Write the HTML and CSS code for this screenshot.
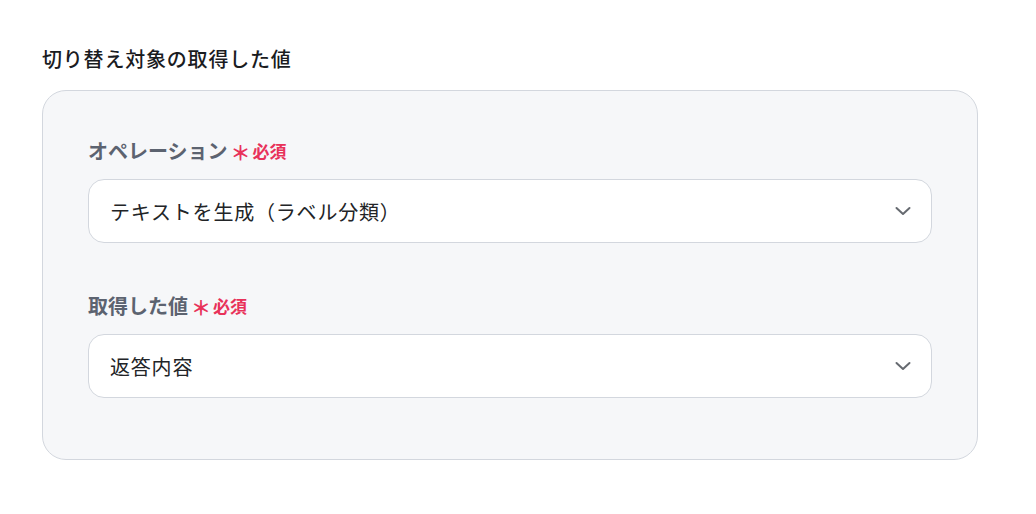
FILE: index.html
```html
<!DOCTYPE html>
<html lang="ja">
<head>
<meta charset="utf-8">
<link rel="stylesheet" href="styles.css">
</head>
<body>
<div class="page">
  <h2 class="title">切り替え対象の取得した値</h2>
  <div class="card">
    <div class="field">
      <div class="label">オペレーション<span class="req"><span class="ast">＊</span>必須</span></div>
      <div class="select">
        <span class="value">テキストを生成（ラベル分類）</span>
        <svg class="chev" width="20" height="20" viewBox="0 0 20 20"><path d="M3.5 7 L10 13 L16.5 7" fill="none" stroke="#666a70" stroke-width="2" stroke-linecap="round" stroke-linejoin="round"/></svg>
      </div>
    </div>
    <div class="field">
      <div class="label">取得した値<span class="req"><span class="ast">＊</span>必須</span></div>
      <div class="select">
        <span class="value">返答内容</span>
        <svg class="chev" width="20" height="20" viewBox="0 0 20 20"><path d="M3.5 7 L10 13 L16.5 7" fill="none" stroke="#666a70" stroke-width="2" stroke-linecap="round" stroke-linejoin="round"/></svg>
      </div>
    </div>
  </div>
</div>
</body>
</html>
```
FILE: styles.css
```css
* { box-sizing: border-box; }
html, body { margin: 0; padding: 0; background: #fff; }
body {
  font-family: "Noto Sans CJK JP", "Noto Sans", sans-serif;
  color: #1f2124;
}
.page {
  padding: 44px 58px 0 42px;
}
.title {
  margin: 0 0 16px;
  font-size: 20px;
  font-weight: 500;
  letter-spacing: 0.8px;
  line-height: 30px;
  color: #1a1c1f;
}
.card {
  border: 1px solid #d3d7de;
  border-radius: 24px;
  background: #f6f7f9;
  padding: 46px 45px 61px;
  display: flex;
  flex-direction: column;
  gap: 49px;
}
.field {
  display: flex;
  flex-direction: column;
  gap: 14px;
}
.label {
  display: flex;
  align-items: center;
  font-size: 20px;
  font-weight: 700;
  line-height: 28px;
  color: #5c6370;
}
.req {
  display: inline-flex;
  align-items: center;
  color: #e8325a;
  font-size: 17px;
  font-weight: 700;
  margin-left: 3px;
}
.ast {
  font-size: 20px;
  margin-right: 2px;
  position: relative;
  top: 2px;
}
.select {
  height: 64px;
  background: #fff;
  border: 1px solid #d3d7de;
  border-radius: 16px;
  display: flex;
  align-items: center;
  justify-content: space-between;
  padding: 0 18px 0 21px;
}
.value {
  font-size: 20px;
  font-weight: 400;
  letter-spacing: 0.8px;
  color: #222427;
}
.chev { display: block; }
```
